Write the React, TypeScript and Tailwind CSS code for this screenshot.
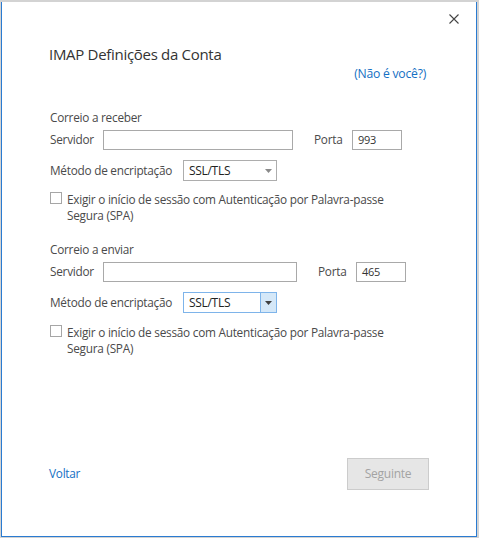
import React from "react";

const font = { fontFamily: '"Open Sans", "Noto Sans", sans-serif' };

function TextInput({ value, w }: { value?: string; w: string }) {
  return (
    <div className={`${w} h-[20px] border border-[#a9a9a9] bg-white flex items-center pl-[5px] text-[11px] text-[#333]`}>
      {value}
    </div>
  );
}

function Select({ active }: { active?: boolean }) {
  return (
    <div
      className={`w-[94px] h-[21px] flex items-stretch bg-white border ${
        active ? "border-[#7eb4ea]" : "border-[#adadad]"
      }`}
    >
      <div className="flex-1 flex items-center pl-[5px] text-[12px] text-[#222] tracking-[-0.3px]">SSL/TLS</div>
      <div
        className={`w-[16px] flex items-center justify-center ${
          active ? "bg-[#d5e8f8] border-l border-[#7eb4ea]" : ""
        }`}
      >
        <svg width="7" height="4" viewBox="0 0 7 4">
          <path d="M0 0 H7 L3.5 4 Z" fill={active ? "#404040" : "#8a8a8a"} />
        </svg>
      </div>
    </div>
  );
}

function Section({
  title,
  servW,
  port,
  active,
  cbTop,
  gapTop,
}: {
  title: string;
  servW: string;
  port: string;
  active?: boolean;
  cbTop: string;
  gapTop: string;
}) {
  return (
    <div className="flex flex-col pl-[48px]">
      <div className={`${gapTop} h-[16px] flex items-center`}>{title}</div>
      <div className="mt-[4px] h-[20px] flex items-center">
        <div className="w-[53px]">Servidor</div>
        <TextInput w={servW} />
        <div className="ml-[21px] w-[38px]">Porta</div>
        <TextInput w="w-[50px]" value={port} />
      </div>
      <div className="mt-[10px] h-[21px] flex items-center">
        <div className="w-[133px]">Método de encriptação</div>
        <Select active={active} />
      </div>
      <div className={`${cbTop} flex items-start`}>
        <div className="mt-[1px] w-[12px] h-[12px] border border-[#a6a6a6] bg-white shrink-0" />
        <div className="ml-[5px] leading-[16px]">
          Exigir o início de sessão com Autenticação por Palavra-passe
          <br />
          Segura (SPA)
        </div>
      </div>
    </div>
  );
}

export default function App() {
  return (
    <div className="w-[479px] h-[538px] bg-[#d3d3d3] pt-[2px]" style={font}>
      <div className="ml-[1px] w-[476px] h-[535px] bg-white border-x border-b border-[#2a7bd1] flex flex-col text-[11.8px] tracking-[-0.25px] text-[#4a4a4a]">
        <div className="mt-[12px] flex justify-end pr-[17px]">
          <svg width="10" height="10" viewBox="0 0 10 10">
            <path d="M0.5 0.5 L9.5 9.5 M9.5 0.5 L0.5 9.5" stroke="#444" strokeWidth="1.1" />
          </svg>
        </div>
        <div className="mt-[20px] h-[20px] pl-[47px] flex items-center text-[15px] tracking-[-0.3px] text-[#333]">
          IMAP Definições da Conta
        </div>
        <div className="mt-[2px] h-[16px] flex items-center justify-end pr-[50px] text-[12.2px] text-[#1570c4]">
          (Não é você?)
        </div>
        <Section
          title="Correio a receber"
          servW="w-[190px]"
          port="993"
          cbTop="mt-[10px]"
          gapTop="mt-[28px]"
        />
        <Section
          title="Correio a enviar"
          servW="w-[194px]"
          port="465"
          active
          cbTop="mt-[11px]"
          gapTop="mt-[19px]"
        />
        <div className="mt-auto mb-[46px] h-[32px] flex items-center justify-between pl-[47px] pr-[47px]">
          <div className="text-[#1570c4]">Voltar</div>
          <div className="w-[82px] h-[32px] bg-[#e6e6e6] border border-[#cccccc] flex items-center justify-center text-[#a3a3a3] text-[12px]">
            Seguinte
          </div>
        </div>
      </div>
    </div>
  );
}
